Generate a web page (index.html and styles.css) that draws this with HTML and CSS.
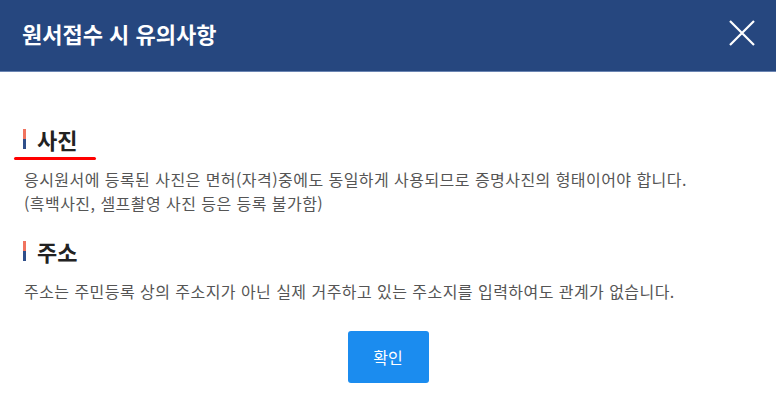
FILE: index.html
```html
<!DOCTYPE html>
<html lang="ko">
<head>
<meta charset="utf-8">
<link rel="stylesheet" href="styles.css">
</head>
<body>
<div class="modal">
  <header class="modal-head">
    <h1 class="modal-title">원서접수 시 유의사항</h1>
    <button class="close-btn" aria-label="닫기">
      <svg width="28" height="28" viewBox="0 0 28 28"><path d="M2 2 L26 26 M26 2 L2 26" stroke="#fff" stroke-width="2.2" fill="none"/></svg>
    </button>
  </header>
  <div class="modal-body">
    <section class="sect">
      <h2 class="sect-title marked"><span class="bar"></span>사진</h2>
      <p class="sect-text">응시원서에 등록된 사진은 면허(자격)중에도 동일하게 사용되므로 증명사진의 형태이어야 합니다.<br>(흑백사진, 셀프촬영 사진 등은 등록 불가함)</p>
    </section>
    <section class="sect">
      <h2 class="sect-title"><span class="bar"></span>주소</h2>
      <p class="sect-text">주소는 주민등록 상의 주소지가 아닌 실제 거주하고 있는 주소지를 입력하여도 관계가 없습니다.</p>
    </section>
    <div class="actions">
      <button class="ok-btn">확인</button>
    </div>
  </div>
</div>
</body>
</html>
```
FILE: styles.css
```css
* { box-sizing: border-box; }
html, body { margin: 0; padding: 0; background: #fff; }
body { font-family: "Noto Sans CJK KR", "Noto Sans", sans-serif; width: 776px; height: 413px; overflow: hidden; }
.modal { width: 776px; }
.modal-head {
  height: 72px;
  background: #26477f;
  border-bottom: 1px solid #6a84b2;
  display: flex;
  align-items: center;
  justify-content: space-between;
  padding: 0 20px 0 22px;
}
.modal-title {
  margin: 0;
  color: #fff;
  font-size: 22px;
  font-weight: 700;
  letter-spacing: 0;
  padding-bottom: 6px;
}
.close-btn {
  background: none;
  border: 0;
  padding: 0;
  width: 28px;
  height: 28px;
  display: flex;
  margin-top: -5px;
}
.modal-body { padding: 53px 24px 0 24px; }
.sect { margin-bottom: 22px; }
.sect-title {
  margin: 0 0 14px 0;
  font-size: 22px;
  font-weight: 700;
  color: #222;
  display: flex;
  align-items: center;
  line-height: 28px;
  position: relative;
}
.bar {
  display: inline-block;
  width: 3px;
  height: 20px;
  background: linear-gradient(#f0735f 0 50%, #2f4f8a 50% 100%);
  margin-right: 11px;
  margin-left: -1px;
}
.marked::after {
  content: "";
  position: absolute;
  left: -10px;
  top: 32px;
  width: 82px;
  height: 3px;
  border-radius: 2px;
  background: #f00;
}
.sect-text {
  margin: 0;
  font-size: 16px;
  line-height: 24px;
  color: #555;
  letter-spacing: 0.45px;
}
.actions { display: flex; justify-content: center; padding-top: 6px; }
.ok-btn {
  width: 81px;
  height: 52px;
  background: #1b8cef;
  border: 0;
  border-radius: 3px;
  color: #fff;
  font-family: inherit;
  font-size: 16px;
}
```
